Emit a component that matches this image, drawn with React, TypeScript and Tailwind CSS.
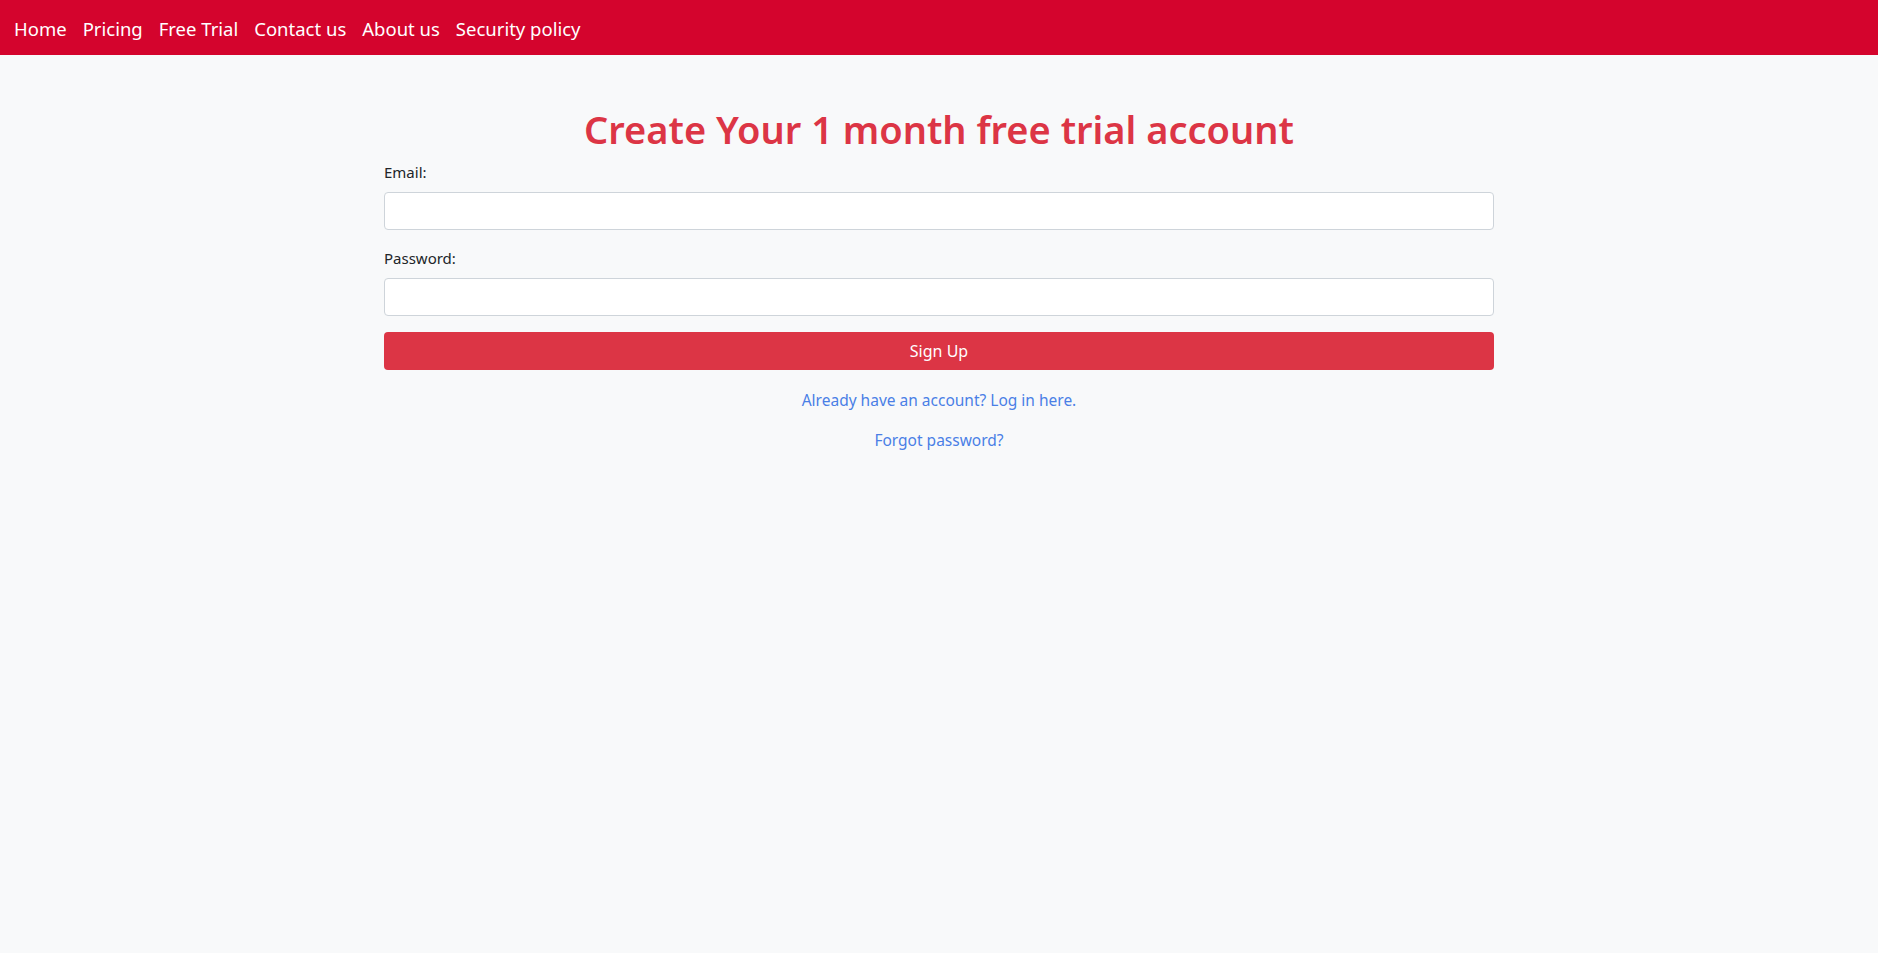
export default function App() {
  const font = { fontFamily: '"Noto Sans", "Open Sans", sans-serif' };
  return (
    <div className="min-h-[953px] bg-[#f8f9fa]" style={font}>
      <nav className="h-[55px] bg-[#d4042d] flex items-center pl-[14px] pt-[3px] gap-[16px] text-white text-[18.5px]">
        {["Home", "Pricing", "Free Trial", "Contact us", "About us", "Security policy"].map((t) => (
          <a key={t} className="whitespace-nowrap">{t}</a>
        ))}
      </nav>
      <div className="w-[1110px] mx-auto pt-[50px]">
        <h1 className="text-center text-[#dc3545] text-[38px] font-semibold leading-[48px] mb-[7px]">
          Create Your 1 month free trial account
        </h1>
        <label className="block text-[15px] text-[#212529] leading-[24px] mb-[8px]">Email:</label>
        <input className="block w-full h-[38px] bg-white border border-[#ced4da] rounded-[4px] mb-[16px]" />
        <label className="block text-[15px] text-[#212529] leading-[24px] mb-[8px]">Password:</label>
        <input type="password" className="block w-full h-[38px] bg-white border border-[#ced4da] rounded-[4px] mb-[16px]" />
        <button className="block w-full h-[38px] bg-[#dc3545] text-white text-[16px] rounded-[4px]">Sign Up</button>
        <p className="text-center text-[15.5px] text-[#4a7fe6] mt-[18px] leading-[24px]">Already have an account? Log in here.</p>
        <p className="text-center text-[15.5px] text-[#4a7fe6] mt-[16px] leading-[24px]">Forgot password?</p>
      </div>
    </div>
  );
}
